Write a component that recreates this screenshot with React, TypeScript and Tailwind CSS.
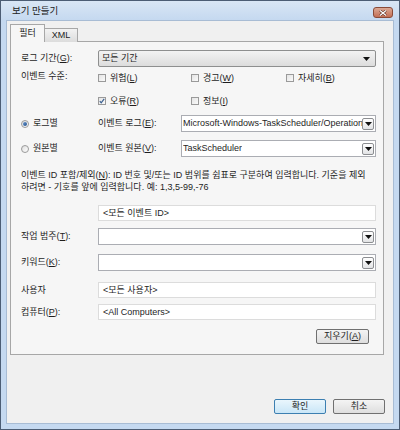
import React from "react";

const Arrow = () => (
  <svg width="7" height="4" viewBox="0 0 7 4">
    <path d="M0 0h7L3.5 4z" fill="#111" />
  </svg>
);

const DropBtn = () => (
  <span className="flex h-[12px] w-[12px] shrink-0 items-center justify-center rounded-[2px] border border-[#8c8e91] bg-gradient-to-b from-white to-[#e2e3e5]">
    <Arrow />
  </span>
);

const Combo = ({ text = "", className = "" }: { text?: string; className?: string }) => (
  <div
    className={`flex h-[17px] min-w-0 items-center justify-between border border-[#abadb3] bg-white pl-[1px] pr-[1px] ${className}`}
  >
    <span className="overflow-hidden whitespace-nowrap text-[9px] leading-none">{text}</span>
    <DropBtn />
  </div>
);

const Input = ({ text }: { text: string }) => (
  <div className="flex h-[16px] min-w-0 flex-1 items-center border border-[#dcdcdc] bg-white px-[4px]">
    <span className="text-[9px] leading-none">{text}</span>
  </div>
);

const Check = ({ label, checked = false }: { label: React.ReactNode; checked?: boolean }) => (
  <div className="flex items-center gap-[3px]">
    <span className="flex h-[8px] w-[8px] items-center justify-center border border-[#9a9a9a] bg-gradient-to-br from-[#e4e4e4] to-[#fafafa]">
      {checked && (
        <svg width="6" height="6" viewBox="0 0 6 6">
          <path d="M0.8 3.2l1.4 1.6L5.2 0.8" stroke="#3a5f8f" strokeWidth="1.2" fill="none" />
        </svg>
      )}
    </span>
    <span className="ml-[1px]">{label}</span>
  </div>
);

const Radio = ({ checked = false }: { checked?: boolean }) => (
  <span className="flex h-[8px] w-[8px] items-center justify-center rounded-full border border-[#9a9a9a] bg-gradient-to-br from-[#dedede] to-white">
    {checked && <span className="h-[4px] w-[4px] rounded-full bg-gradient-to-br from-[#6d9ad0] to-[#1f4f8c]" />}
  </span>
);

const Btn = ({ children, active = false, className = "" }: { children: React.ReactNode; active?: boolean; className?: string }) => (
  <div
    className={`flex h-[15px] w-[52px] items-center justify-center rounded-[2px] border text-[9px] leading-none ${
      active ? "border-[#3c7fb1] bg-gradient-to-b from-[#eaf6fd] to-[#c9e6f7]" : "border-[#707070] bg-gradient-to-b from-[#f4f4f4] to-[#dedede]"
    } ${className}`}
  >
    {children}
  </div>
);

export default function App() {
  return (
    <div className="flex h-[430px] w-[400px] flex-col border border-[#4c5d74] bg-[#c5d9f0] font-['Liberation_Sans','Noto_Sans_CJK_KR',sans-serif] text-[#1e1e1e]">
      {/* title bar */}
      <div className="flex h-[19px] items-center justify-between bg-gradient-to-b from-[#d9e6f5] to-[#c5d9f0] pl-[11px] pr-[6px]">
        <span className="text-[9.5px] leading-none text-[#222]">보기 만들기</span>
        <span className="mt-[4px] flex h-[11px] w-[20px] items-center justify-center rounded-[3px] border border-[#8a4a38] bg-gradient-to-b from-[#dba894] to-[#c36e55]">
          <svg width="8" height="6" viewBox="0 0 8 6">
            <path d="M1 0.5l6 5M7 0.5l-6 5" stroke="#5a2a20" strokeWidth="2.4" />
            <path d="M1 0.5l6 5M7 0.5l-6 5" stroke="#fff" strokeWidth="1.3" />
          </svg>
        </span>
      </div>

      {/* client area */}
      <div className="mx-[5px] mb-[5px] flex flex-1 flex-col border border-[#a8bcd4] bg-[#f0f0f0] text-[9px] leading-none">
        {/* tabs */}
        <div className="relative z-10 ml-[3px] mt-[3px] flex items-end">
          <div className="flex h-[18px] w-[35px] items-center justify-center border border-b-0 border-[#a7a7a7] bg-[#f6f6f6] pb-[1px]">
            필터
          </div>
          <div className="flex h-[14px] w-[33px] items-center justify-center border border-b-0 border-l-0 border-[#a7a7a7] bg-gradient-to-b from-[#f2f2f2] to-[#dcdcdc] text-[9px]">
            XML
          </div>
        </div>

        {/* panel */}
        <div className="-mt-[1px] ml-[3px] flex h-[314px] w-[374px] flex-col border border-[#a7a7a7] bg-[#f6f6f6] pl-[10px] pr-[7px]">
          <div className="mt-[8px] flex items-center">
            <span className="w-[77px] shrink-0">
              로그 기간(<u>G</u>):
            </span>
            <div className="flex h-[17px] flex-1 items-center justify-between rounded-[2px] border border-[#8e8f8f] bg-gradient-to-b from-[#f3f3f3] to-[#dcdcdc] pl-[3px] pr-[5px]">
              <span>모든 기간</span>
              <Arrow />
            </div>
          </div>

          <div className="mt-[5px] flex h-[12px] items-center">
            <span className="w-[77px] shrink-0 self-start">이벤트 수준:</span>
            <div className="flex flex-1 items-center">
              <div className="w-[93px]">
                <Check label={<>위험(<u>L</u>)</>} />
              </div>
              <div className="w-[95px]">
                <Check label={<>경고(<u>W</u>)</>} />
              </div>
              <Check label={<>자세히(<u>B</u>)</>} />
            </div>
          </div>

          <div className="mt-[11px] flex h-[12px] items-center">
            <span className="w-[77px] shrink-0" />
            <div className="flex flex-1 items-center">
              <div className="w-[93px]">
                <Check checked label={<>오류(<u>R</u>)</>} />
              </div>
              <Check label={<>정보(<u>I</u>)</>} />
            </div>
          </div>

          <div className="mt-[8px] flex items-center">
            <div className="flex w-[77px] shrink-0 items-center gap-[4px]">
              <Radio checked />
              <span>로그별</span>
            </div>
            <span className="w-[83px] shrink-0">
              이벤트 로그(<u>E</u>):
            </span>
            <Combo className="flex-1" text="Microsoft-Windows-TaskScheduler/Operation" />
          </div>

          <div className="mt-[8px] flex items-center">
            <div className="flex w-[77px] shrink-0 items-center gap-[4px]">
              <Radio />
              <span>원본별</span>
            </div>
            <span className="w-[83px] shrink-0">
              이벤트 원본(<u>V</u>):
            </span>
            <Combo className="flex-1" text="TaskScheduler" />
          </div>

          <p className="mt-[12px] pr-[2px] leading-[12px]">
            이벤트 ID 포함/제외(<u>N</u>): ID 번호 및/또는 ID 범위를 쉼표로 구분하여 입력합니다. 기준을 제외
            <br />
            하려면 - 기호를 앞에 입력합니다. 예: 1,3,5-99,-76
          </p>

          <div className="mt-[12px] flex items-center">
            <span className="w-[77px] shrink-0" />
            <Input text="<모든 이벤트 ID>" />
          </div>

          <div className="mt-[7px] flex items-center">
            <span className="w-[77px] shrink-0">
              작업 범주(<u>T</u>):
            </span>
            <Combo className="h-[16px] flex-1" />
          </div>

          <div className="mt-[9px] flex items-center">
            <span className="w-[77px] shrink-0">
              키워드(<u>K</u>):
            </span>
            <Combo className="h-[16px] flex-1" />
          </div>

          <div className="mt-[11px] flex items-center">
            <span className="w-[77px] shrink-0">사용자</span>
            <Input text="<모든 사용자>" />
          </div>

          <div className="mt-[6px] flex items-center">
            <span className="w-[77px] shrink-0">
              컴퓨터(<u>P</u>):
            </span>
            <Input text="<All Computers>" />
          </div>

          <div className="mt-[9px] flex justify-end pr-[7px]">
            <Btn className="w-[53px]">
              지우기(<u>A</u>)
            </Btn>
          </div>
        </div>

        {/* bottom buttons */}
        <div className="mt-auto mb-[9px] flex justify-end gap-[7px] pr-[8px]">
          <Btn active>확인</Btn>
          <Btn>취소</Btn>
        </div>
      </div>
    </div>
  );
}
